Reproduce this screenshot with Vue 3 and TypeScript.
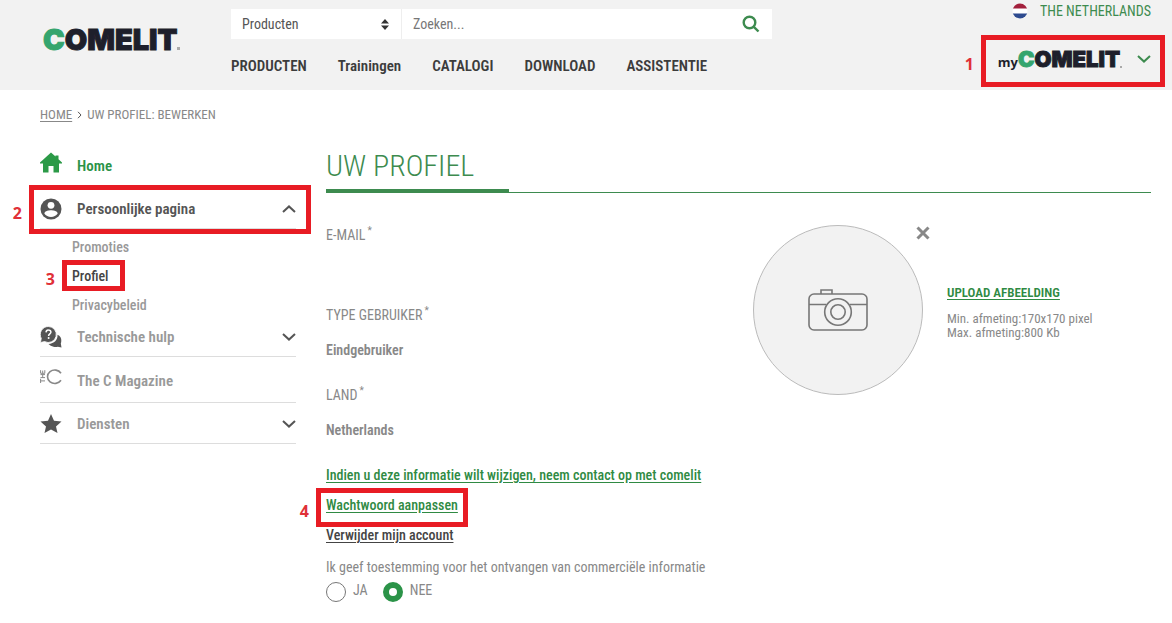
<script setup lang="ts">
import { ref } from 'vue'

const category = ref('Producten')
const query = ref('')
const consent = ref('nee')

const nav: string[] = ['PRODUCTEN', 'Trainingen', 'CATALOGI', 'DOWNLOAD', 'ASSISTENTIE']

const subItems = [
  { label: 'Promoties', active: false },
  { label: 'Profiel', active: true },
  { label: 'Privacybeleid', active: false },
]

const fields = [
  { label: 'E-MAIL', value: '' },
  { label: 'TYPE GEBRUIKER', value: 'Eindgebruiker' },
  { label: 'LAND', value: 'Netherlands' },
]
</script>

<template>
  <div class="page">
    <header class="header">
      <a class="logo" href="#" aria-label="Comelit"><span class="logo-c">C</span><span class="logo-rest">OMELIT</span><i class="logo-dot"></i></a>

      <div class="header-main">
        <form class="search" role="search" @submit.prevent>
          <div class="select-wrap">
            <select v-model="category" aria-label="Categorie">
              <option>Producten</option>
            </select>
            <svg class="sort" viewBox="0 0 8 11" aria-hidden="true"><path d="M4 0 8 4.500H0zM4 11 0 6.500h8z" /></svg>
          </div>
          <input v-model="query" type="text" placeholder="Zoeken..." aria-label="Zoeken" />
          <button type="submit" class="search-btn" aria-label="Zoek">
            <svg viewBox="0 0 18 18"><circle cx="7.500" cy="7.500" r="5.800" /><path d="M11.800 11.800 16.500 16.500" /></svg>
          </button>
        </form>
        <nav class="nav">
          <a v-for="item in nav" :key="item" href="#">{{ item }}</a>
        </nav>
      </div>

      <div class="account">
        <a class="country" href="#">
          <svg class="flag" viewBox="0 0 16 16" aria-hidden="true">
            <clipPath id="flag-clip"><circle cx="8" cy="8" r="7.500" /></clipPath>
            <g clip-path="url(#flag-clip)">
              <rect width="16" height="16" fill="#fff" />
              <rect width="16" height="5.500" fill="#a2203c" />
              <rect y="10.500" width="16" height="5.500" fill="#2e4b8f" />
            </g>
          </svg>
          THE NETHERLANDS
        </a>
        <button type="button" class="my-account" aria-label="myComelit">
          <span class="my">my</span>
          <span class="logo small"><span class="logo-c">C</span><span class="logo-rest">OMELIT</span><i class="logo-dot"></i></span>
          <svg class="chev green" viewBox="0 0 14 8"><path d="M1 1 7 6.600 13 1" /></svg>
          <span class="mark mark-1"><b>1</b></span>
        </button>
      </div>
    </header>

    <nav class="breadcrumb" aria-label="Kruimelpad">
      <a href="#">HOME</a>
      <svg viewBox="0 0 5 8" aria-hidden="true"><path d="M1 .8 4 4 1 7.200" /></svg>
      <span>UW PROFIEL: BEWERKEN</span>
    </nav>

    <div class="body">
      <aside class="sidebar">
        <a href="#" class="row home">
          <svg class="icon" viewBox="0 0 22 22"><path d="M11 .5 15.500 4.600V3.500H18.500V7.300L22 10.500V11.500H19V20.500H13.500V14H8.500V20.500H3V11.500H0V10.500z" /></svg>
          <span>Home</span>
        </a>
        <button type="button" class="row person" aria-expanded="true">
          <svg class="icon" viewBox="0 0 22 22">
            <circle cx="11" cy="11" r="10.500" />
            <circle cx="11" cy="7.300" r="3.400" fill="#fff" />
            <path d="M4.300 15.500C5 12.900 8.500 12.300 11 12.300s6 .6 6.700 3.200C16.200 17.700 13.700 19 11 19s-5.200-1.300-6.700-3.500z" fill="#fff" />
          </svg>
          <span>Persoonlijke pagina</span>
          <svg class="chev" viewBox="0 0 14 8"><path d="M1 7 7 1.400 13 7" /></svg>
          <span class="mark mark-2"><b>2</b></span>
        </button>
        <ul class="sub">
          <li v-for="item in subItems" :key="item.label">
            <a href="#" :class="{ active: item.active }">{{ item.label }}<span v-if="item.active" class="mark mark-3"><b>3</b></span></a>
          </li>
        </ul>
        <button type="button" class="row help" aria-expanded="false">
          <svg class="icon" viewBox="0 0 22 22">
            <path d="M13.500 20.700A8 8 0 0 1 8.500 18C14 17.600 18 14 17.500 8.800 20.300 10 21.500 12.300 21.300 15c0 1-.3 1.900-.5 2.500L21.500 21.500 17.800 20.700a8 8 0 0 1-4.300 0z" />
            <path d="M8.300.5A8 8 0 1 1 4.600 15.600L.4 16.500 1.300 12.400A8 8 0 0 1 8.300.5z" stroke="#fff" stroke-width=".8" />
            <path d="M6 6.300C6.200 4.600 7.300 3.900 8.500 4c1.500 0 2.500.9 2.400 2.200-.1 1.600-2.300 1.700-2.300 3.700" fill="none" stroke="#fff" stroke-width="1.500" />
            <circle cx="8.600" cy="12.100" r="1" fill="#fff" />
          </svg>
          <span>Technische hulp</span>
          <svg class="chev" viewBox="0 0 14 8"><path d="M1 1 7 6.600 13 1" /></svg>
        </button>
        <a href="#" class="row magazine">
          <svg class="icon thin" viewBox="0 0 22 22">
            <path d="M.6 14V9.800M.6 11.900H5M.5 8.600H5M.5 5.600H5M2.700 8.600V5.600M.6 1.200V4.300H4.800V1.200M2.700 4.300V1.600" />
            <path class="big" d="M21 4.200A7.300 6.700 0 1 0 21 11.300" />
          </svg>
          <span>The C Magazine</span>
        </a>
        <button type="button" class="row services" aria-expanded="false">
          <svg class="icon" viewBox="0 0 22 22"><path d="M11 1 14 7.700 21.500 8.500 16 13.400 17.500 20 11 16.600 4.500 20 6 13.400.5 8.500 8 7.700z" /></svg>
          <span>Diensten</span>
          <svg class="chev" viewBox="0 0 14 8"><path d="M1 1 7 6.600 13 1" /></svg>
        </button>
      </aside>

      <main class="content">
        <h1>UW PROFIEL</h1>
        <div class="profile">
          <div class="details">
            <dl>
              <div v-for="field in fields" :key="field.label" class="field">
                <dt>{{ field.label }}<sup>*</sup></dt>
                <dd>{{ field.value }}</dd>
              </div>
            </dl>
            <div class="links">
              <a href="#">Indien u deze informatie wilt wijzigen, neem contact op met comelit</a>
              <a href="#" class="password">Wachtwoord aanpassen<span class="mark mark-4"><b>4</b></span></a>
              <a href="#" class="remove">Verwijder mijn account</a>
            </div>
            <fieldset class="consent">
              <legend>Ik geef toestemming voor het ontvangen van commerciële informatie</legend>
              <div class="options">
                <label><input v-model="consent" type="radio" name="consent" value="ja" /><span>JA</span></label>
                <label><input v-model="consent" type="radio" name="consent" value="nee" /><span>NEE</span></label>
              </div>
            </fieldset>
          </div>

          <div class="picture">
            <div class="avatar">
              <svg viewBox="0 0 60 42" aria-hidden="true">
                <rect x="1" y="5" width="58" height="36" rx="5" />
                <path d="M13 5V1H24V5M1 15.500H18M42 15.500H59" />
                <circle cx="30" cy="23" r="13.300" />
                <circle cx="30" cy="23" r="7.200" />
              </svg>
              <button type="button" class="clear" aria-label="Verwijder afbeelding">
                <svg viewBox="0 0 14 14"><path d="M1.500 1.500 12.500 12.500M12.500 1.500 1.500 12.500" /></svg>
              </button>
            </div>
            <div class="upload">
              <a href="#">UPLOAD AFBEELDING</a>
              <p>Min. afmeting:170x170 pixel<br />Max. afmeting:800 Kb</p>
            </div>
          </div>
        </div>
      </main>
    </div>
  </div>
</template>

<style>
body {
  margin: 0;
  background: #fff;
}
</style>

<style scoped>
.page {
  font-family: "Roboto Condensed", "Liberation Sans Narrow", "Liberation Sans", sans-serif;
  font-size: 14px;
  font-weight: 400;
  line-height: 20px;
  color: #888;
}
* {
  box-sizing: border-box;
}
a {
  color: inherit;
  text-decoration: none;
}
button,
input,
select {
  font: inherit;
  color: inherit;
  border: 0;
  margin: 0;
  padding: 0;
  background: none;
}
ul,
dl,
dd,
p {
  margin: 0;
  padding: 0;
  list-style: none;
}
.header {
  display: flex;
  min-height: 90px;
  padding: 0 21px 0 43px;
  background: #f2f2f2;
}
.logo {
  display: flex;
  flex: none;
  width: 188px;
  padding-top: 24px;
  font-family: Inter, sans-serif;
  font-weight: 900;
  font-size: 29px;
  line-height: 32px;
  color: #1e1f2b;
  -webkit-text-stroke: 1px currentColor;
}
.logo-c {
  color: #35a56e;
}
.logo-dot {
  align-self: flex-end;
  width: 3px;
  height: 3px;
  margin-bottom: 40px;
  background: #aaa;
}
.logo.small {
  width: auto;
  padding: 0;
  font-size: 22px;
  line-height: 26px;
}
.small .logo-dot {
  margin-bottom: 4px;
  width: 2px;
  height: 2px;
}
.header-main {
  flex: 0 1 541px;
  padding-top: 9px;
}
.search {
  display: flex;
  height: 30px;
  background: #fff;
  color: #555;
}
.select-wrap {
  position: relative;
  flex: none;
  width: 171px;
  border-right: 1px solid #eee;
}
.select-wrap select {
  width: 100%;
  height: 30px;
  padding: 0 11px;
  appearance: none;
}
.sort {
  position: absolute;
  top: 10px;
  right: 12px;
  width: 8px;
  height: 11px;
  fill: #333;
  pointer-events: none;
}
.search input {
  flex: 1;
  min-width: 0;
  padding: 0 11px;
}
.search input::placeholder {
  color: #777;
  opacity: 1;
}
.search-btn {
  width: 42px;
  padding: 0 12px;
  line-height: 0;
}
.search-btn svg {
  width: 18px;
  height: 18px;
  fill: none;
  stroke: #3d8b4f;
  stroke-width: 2.4;
}
.nav {
  display: flex;
  gap: 31px;
  margin-top: 17px;
  font-size: 15px;
  font-weight: 600;
  color: #3c3c3c;
}
.account {
  display: flex;
  flex-direction: column;
  align-items: flex-end;
  margin-left: auto;
}
.country {
  display: flex;
  align-items: center;
  gap: 12px;
  height: 22px;
  color: #3d8b4f;
}
.flag {
  width: 16px;
  height: 16px;
}
.my-account {
  position: relative;
  display: flex;
  align-items: center;
  margin-top: 24px;
}
.my {
  padding-top: 6px;
  font-family: "Open Sans", sans-serif;
  font-size: 13px;
  font-weight: 700;
  color: #1e1f2b;
}
.chev {
  width: 14px;
  height: 8px;
  fill: none;
  stroke: #555;
  stroke-width: 2;
}
.chev.green {
  margin-left: 15px;
  stroke: #3d8b4f;
}
.breadcrumb {
  display: flex;
  align-items: center;
  gap: 5px;
  height: 50px;
  padding-left: 40px;
  font-size: 13px;
}
.breadcrumb a {
  text-decoration: underline;
  text-underline-offset: 2px;
}
.breadcrumb svg {
  width: 5px;
  height: 8px;
  fill: none;
  stroke: #555;
}
.body {
  display: grid;
  grid-template-columns: 256px minmax(0, 1fr);
  gap: 30px;
  padding: 0 21px 21px 40px;
}
.row {
  position: relative;
  display: flex;
  align-items: center;
  width: 100%;
  gap: 15px;
  border-bottom: 1px solid #ddd;
  font-size: 15px;
  font-weight: 600;
  color: #999;
  text-align: left;
}
.row .chev {
  margin-left: auto;
}
.icon {
  flex: none;
  width: 22px;
  height: 22px;
  fill: #555;
}
.icon.thin {
  fill: none;
  stroke: #888;
  stroke-width: 1;
}
.icon .big {
  stroke-width: 1.6;
}
.home {
  height: 47px;
  padding-top: 4px;
  border: 0;
  color: #2b9348;
}
.home .icon {
  margin-bottom: 6px;
  fill: #2b9a47;
}
.person {
  height: 42px;
  padding-top: 2px;
  color: #555;
}
.sub {
  padding: 4px 0 0 32px;
  font-weight: 500;
  line-height: 29px;
  color: #999;
}
.sub a {
  position: relative;
}
.sub .active {
  color: #444;
}
.help {
  height: 37px;
  padding-bottom: 3px;
}
.magazine {
  height: 46px;
  padding-top: 2px;
}
.magazine .icon {
  margin-bottom: 2px;
}
.services {
  height: 41px;
  padding-top: 2px;
}
h1 {
  position: relative;
  margin: 0;
  padding: 4px 0 5px;
  border-bottom: 1px solid #3d8b4f;
  font-size: 30px;
  font-weight: 300;
  line-height: 43px;
  color: #3d8b4f;
}
h1::after {
  content: "";
  position: absolute;
  left: 0;
  bottom: -1px;
  width: 183px;
  height: 4px;
  background: #3d8b4f;
}
.profile {
  display: grid;
  grid-template-columns: minmax(0, 1fr) 398px;
  padding-top: 32px;
}
.field {
  display: flex;
  flex-direction: column;
  gap: 15px;
  min-height: 80px;
}
.field dt {
  line-height: 20px;
  height: 20px;
}
.field sup {
  margin-left: 2px;
  font-size: 10px;
  line-height: 0;
}
.field dd {
  font-weight: 600;
}
.links {
  display: flex;
  flex-direction: column;
  align-items: flex-start;
  gap: 10px;
  font-weight: 500;
  color: #2f8a43;
}
.links a,
.upload a {
  text-decoration: underline;
  text-underline-offset: 2px;
}
.links .password {
  position: relative;
}
.links .remove {
  color: #444;
}
.consent {
  margin: 12px 0 0;
  padding: 0;
  border: 0;
}
.consent legend {
  padding: 0;
}
.options {
  display: flex;
  gap: 15px;
  padding-top: 5px;
}
.options label {
  display: flex;
  gap: 7px;
}
.options span {
  line-height: 16px;
}
.options input {
  appearance: none;
  width: 20px;
  height: 20px;
  border: 1px solid #777;
  border-radius: 50%;
}
.options input:checked {
  border: 6px solid #2b9348;
}
.picture {
  display: flex;
  align-items: flex-start;
  gap: 24px;
}
.avatar {
  position: relative;
  display: grid;
  place-items: center;
  flex: none;
  width: 170px;
  height: 170px;
  border: 1px solid #bbb;
  border-radius: 50%;
  background: #f2f2f2;
}
.avatar > svg {
  width: 60px;
  height: 42px;
  fill: none;
  stroke: #777;
  stroke-width: 1.6;
}
.clear {
  position: absolute;
  top: 0;
  right: -8px;
  width: 14px;
  height: 14px;
  line-height: 0;
}
.clear svg {
  width: 14px;
  height: 14px;
  stroke: #888;
  stroke-width: 3;
}
.upload {
  padding-top: 58px;
  font-size: 13px;
}
.upload a {
  font-weight: 600;
  color: #2f8a43;
}
.upload p {
  margin-top: 9px;
  line-height: 14px;
}
.mark {
  position: absolute;
  border: 5px solid #e81c24;
  pointer-events: none;
}
.mark b {
  position: absolute;
  top: 50%;
  right: 100%;
  margin: -7px 12px 0 0;
  font-family: "Noto Sans", "Open Sans", sans-serif;
  font-size: 16px;
  font-weight: 700;
  line-height: 20px;
  color: #e03038;
}
.mark-1 {
  inset: -11px -14px -15px -17px;
}
.mark-2 {
  inset: -2px -15px -6px -11px;
}
.mark-3 {
  inset: -8px -17px -7px -10px;
}
.mark-4 {
  inset: -7px -10px -12px -10px;
}
</style>
